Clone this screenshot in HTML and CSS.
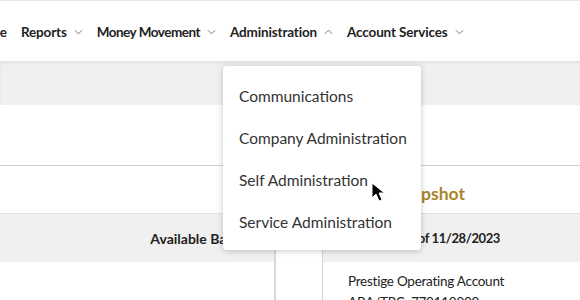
FILE: index.html
```html
<!DOCTYPE html>
<html lang="en">
<head>
<meta charset="utf-8">
<title>Dashboard</title>
<link rel="stylesheet" href="styles.css">
</head>
<body>
<div class="page">
  <header class="topbar">
    <nav class="nav">
      <span class="nav-item">Home</span>
      <span class="nav-item">Reports <svg class="chev" viewBox="0 0 10 6"><path d="M1 1l4 4 4-4"/></svg></span>
      <span class="nav-item tight">Money Movement <svg class="chev" viewBox="0 0 10 6"><path d="M1 1l4 4 4-4"/></svg></span>
      <span class="nav-item open">Administration <svg class="chev" viewBox="0 0 10 6"><path d="M1 5l4-4 4 4"/></svg>
        <div class="menu">
          <div class="menu-item">Communications</div>
          <div class="menu-item">Company Administration</div>
          <div class="menu-item">Self Administration</div>
          <div class="menu-item">Service Administration</div>
        </div>
      </span>
      <span class="nav-item">Account Services <svg class="chev" viewBox="0 0 10 6"><path d="M1 1l4 4 4-4"/></svg></span>
    </nav>
  </header>
  <div class="band"></div>
  <div class="hero"></div>
  <main class="columns">
    <section class="col">
      <div class="col-title"></div>
      <div class="card card-left">
        <div class="card-head right">Available Balance</div>
        <div class="card-body body-left">
          <div class="amount">$59,769.00</div>
        </div>
      </div>
    </section>
    <section class="col">
      <div class="col-title gold">Account Snapshot</div>
      <div class="card card-right">
        <div class="card-head date">Balances as of 11/28/2023</div>
        <div class="card-body">
          <div class="acct">Prestige Operating Account</div>
          <div class="acct">ABA/TRC: 770110000</div>
        </div>
      </div>
    </section>
  </main>
  <svg class="cursor" viewBox="0 0 14 20"><path d="M1 1v15l4-4 3 7 3-1.3-3-6.7h5.5z" fill="#000" stroke="#fff" stroke-width="1"/></svg>
</div>
</body>
</html>
```
FILE: styles.css
```css
* { box-sizing: border-box; }
html, body { margin: 0; padding: 0; background: #fff; }
body {
  font-family: "Lato", "Open Sans", sans-serif;
  color: #222;
  width: 580px;
  height: 300px;
  overflow: hidden;
}
.page { position: relative; width: 580px; height: 300px; overflow: hidden; }

.topbar {
  height: 61px;
  border-top: 1px solid #e6e6e6;
  background: #fff;
  position: relative;
  z-index: 2;
}
.nav {
  display: flex;
  align-items: center;
  height: 60px;
  margin-left: -29px;
  gap: 14px;
}
.nav-item {
  display: flex;
  align-items: center;
  gap: 7px;
  font-size: 13.5px;
  letter-spacing: -0.15px;
  font-weight: 700;
  color: #222;
  position: relative;
  white-space: nowrap;
  padding-top: 1px;
}
.nav-item.tight { letter-spacing: -0.5px; }
.chev {
  width: 9px;
  height: 6px;
  fill: none;
  stroke: #666;
  stroke-width: 1;
}

.menu {
  position: absolute;
  left: -7px;
  top: 43px;
  width: 198px;
  padding: 9px 0 7px;
  background: #fff;
  border-radius: 4px;
  box-shadow: 0 1px 6px rgba(0,0,0,0.22);
  z-index: 5;
  letter-spacing: 0;
}
.menu-item {
  height: 42px;
  line-height: 42px;
  padding-left: 16px;
  font-size: 15.5px;
  font-weight: 400;
  color: #333;
}

.band {
  height: 44px;
  background: #f0f0f0;
  box-shadow: inset 0 2px 3px rgba(0,0,0,0.06);
}
.hero {
  height: 61px;
  border-bottom: 1px solid #cfcfcf;
}

.columns {
  display: grid;
  grid-template-columns: 276px 258px;
  column-gap: 46px;
}
.col-title {
  height: 47px;
  display: flex;
  align-items: center;
  padding-top: 7px;
  font-size: 17.5px;
  font-weight: 700;
  white-space: nowrap;
}
.gold { color: #a8842e; padding-left: 2px; }

.card { border-top: 1px solid #e2e2e2; }
.card-left { border-right: 2px solid #d8d8d8; height: 200px; }
.card-right { border-left: 1px solid #d4d4d4; height: 200px; }
.card-head {
  height: 48px;
  background: #f0f0f0;
  display: flex;
  align-items: center;
  padding: 0 15px 0 25px;
  font-size: 14px;
  font-weight: 700;
  color: #222;
}
.card-head.right { justify-content: flex-end; }
.card-head.date { font-size: 13px; letter-spacing: -0.4px; padding-left: 30px; }
.card-body { padding: 10px 17px 0 25px; }
.body-left { padding-right: 26px; }
.amount {
  text-align: right;
  font-size: 14px;
  margin-top: 27px;
  color: #222;
}
.acct {
  font-size: 13.5px;
  letter-spacing: -0.25px;
  color: #222;
  line-height: 21px;
  position: relative;
  top: -1px;
}

.cursor {
  position: absolute;
  left: 371px;
  top: 182px;
  width: 14px;
  height: 20px;
  z-index: 10;
}
```
